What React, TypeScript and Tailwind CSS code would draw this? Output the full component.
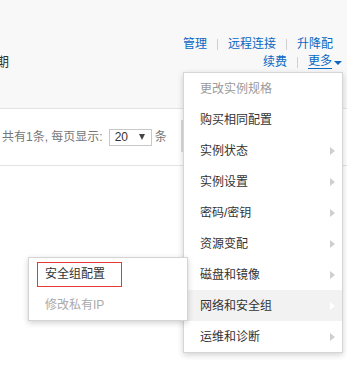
import React from "react";

const menuItems = [
  { label: "更改实例规格", disabled: true, sub: false },
  { label: "购买相同配置", disabled: false, sub: false },
  { label: "实例状态", disabled: false, sub: true },
  { label: "实例设置", disabled: false, sub: true },
  { label: "密码/密钥", disabled: false, sub: true },
  { label: "资源变配", disabled: false, sub: true },
  { label: "磁盘和镜像", disabled: false, sub: true },
  { label: "网络和安全组", disabled: false, sub: true, active: true },
  { label: "运维和诊断", disabled: false, sub: true },
];

function Sep() {
  return <span className="mx-[10px] inline-block h-[11px] w-px bg-[#d0d0d0]" />;
}

export default function App() {
  return (
    <div className="relative h-[367px] w-[347px] overflow-hidden bg-white font-['Liberation_Sans','Noto_Sans_CJK_SC',sans-serif] text-[12px] leading-none">
      {/* Header row */}
      <div className="flex h-[109px] justify-between border-b border-[#e3e3e3] bg-[#f8f8f8]">
        <div className="-ml-[17px] pt-[55px] text-[13px] text-[#333]">到期</div>
        <div className="flex flex-col items-end pr-[5px] pt-[38px] text-[#0a67c2]">
          <div className="mr-[9px] flex items-center">
            <span>管理</span>
            <Sep />
            <span>远程连接</span>
            <Sep />
            <span>升降配</span>
          </div>
          <div className="mt-[5px] flex items-center">
            <span>续费</span>
            <Sep />
            <span className="border-b border-[#0a67c2] pb-px">更多</span>
            <span className="ml-[2px] mt-px inline-block border-x-[4px] border-t-[4px] border-x-transparent border-t-[#0a67c2]" />
          </div>
        </div>
      </div>

      {/* Pagination row */}
      <div className="flex h-[57px] items-center border-b border-[#e3e3e3] pl-[2px] text-[#777]">
        <span>共有1条, 每页显示:</span>
        <div className="ml-[6px] flex h-[17px] w-[43px] items-center justify-between border border-[#c8c8c8] pl-[5px] pr-[6px] text-[#333]">
          <span>20</span>
          <span className="inline-block border-x-[3px] border-t-[6px] border-x-transparent border-t-[#444]" />
        </div>
        <span className="ml-[3px]">条</span>
      </div>

      <div className="absolute left-[181px] top-[120px] h-[32px] w-[2px] bg-[#dcdcdc]" />

      {/* Dropdown menu */}
      <div className="absolute left-[183px] top-[72px] w-[160px] border border-[#d6d6d6] bg-white shadow-[0_2px_6px_rgba(0,0,0,0.18)]">
        {menuItems.map((item) => (
          <div
            key={item.label}
            className={
              "flex h-[31px] items-center justify-between pl-[16px] pr-[7px] " +
              (item.active ? "bg-[#f2f2f2] " : "") +
              (item.disabled ? "text-[#9a9a9a]" : "text-[#333]")
            }
          >
            <span>{item.label}</span>
            {item.sub && (
              <span
                className={
                  "inline-block border-y-[4px] border-l-[5px] border-y-transparent " +
                  (item.active ? "border-l-white" : "border-l-[#cfcfcf]")
                }
              />
            )}
          </div>
        ))}
      </div>

      {/* Submenu */}
      <div className="absolute left-[28px] top-[257px] z-10 w-[160px] border border-[#d4d4d4] bg-white shadow-[0_2px_6px_rgba(0,0,0,0.18)]">
        <div className="flex h-[31px] items-center pl-[16px] text-[#333]">安全组配置</div>
        <div className="flex h-[31px] items-center pl-[16px] text-[#aaa]">修改私有IP</div>
        <div className="absolute left-[8px] top-[4px] h-[25px] w-[85px] border border-[#e53935]" />
      </div>
    </div>
  );
}
